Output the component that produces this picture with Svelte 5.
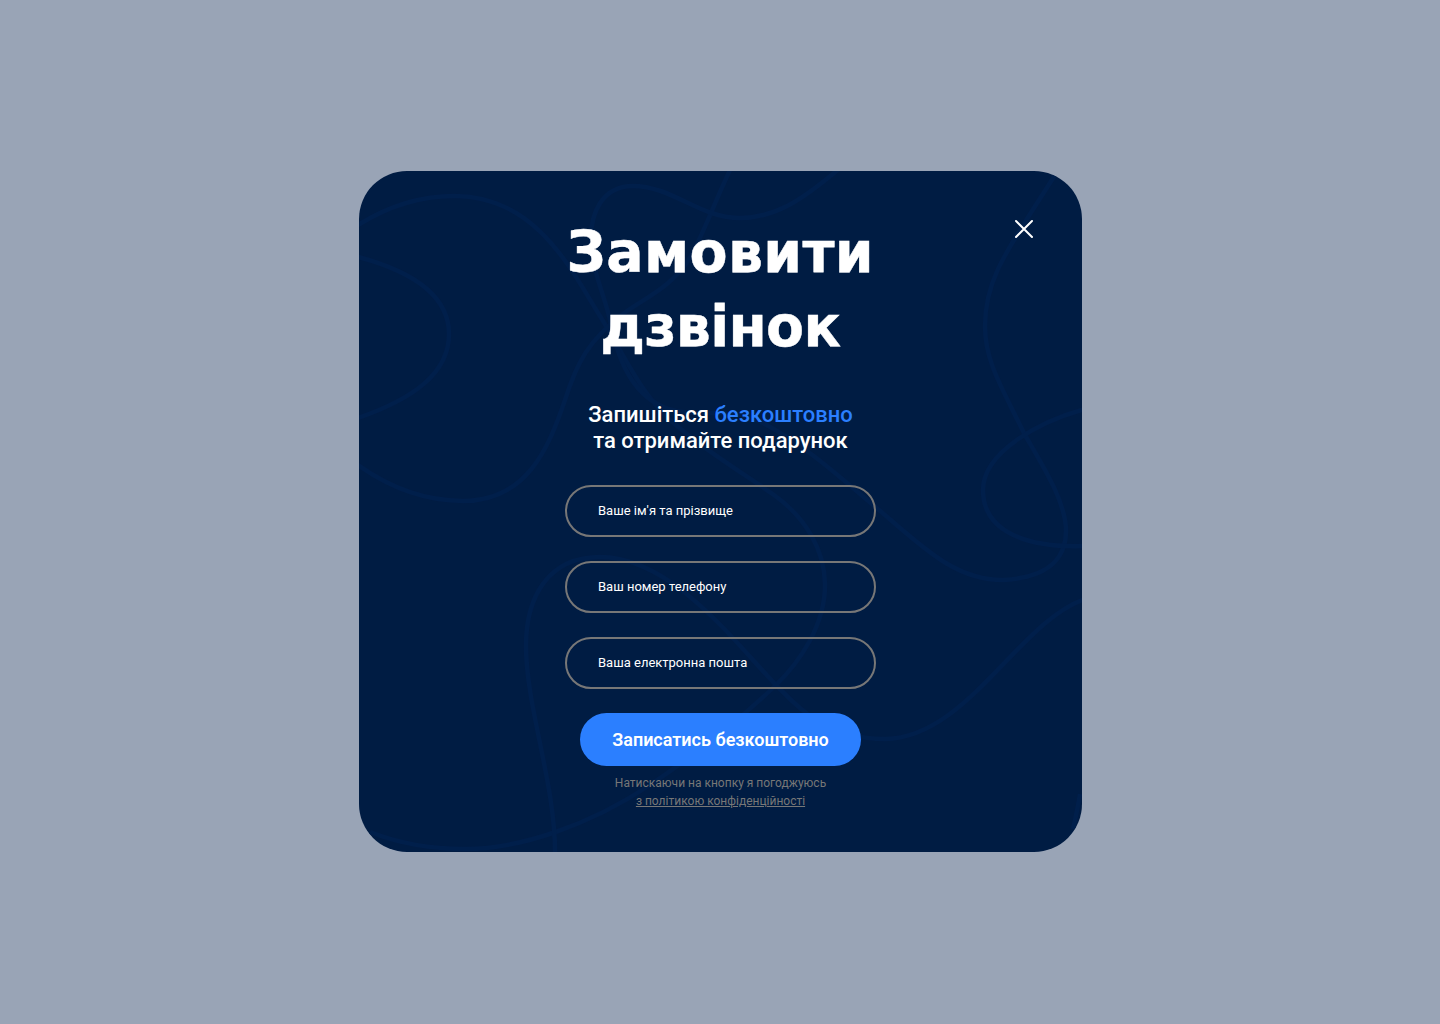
<script>
  const fields = [
    { name: 'name', label: "Ваше ім'я та прізвище" },
    { name: 'phone', label: 'Ваш номер телефону' },
    { name: 'email', label: 'Ваша електронна пошта' },
  ];
</script>

<main class="overlay">
  <section class="card">
    <svg class="waves" viewBox="359 171 723 681" aria-hidden="true">
      <path d="M355 227C392 203 424 196 454 196C536 196 570 268 600 316C626 358 638 389 669 419C704 450 740 471 774 495C805 517 825 550 825 585C825 625 800 662 775 686C735 724 696 754 650 785C590 825 520 849 465 849C430 849 398 843 370 832" />
      <path d="M355 463C392 490 428 501 463 501C526 501 548 450 565 400C577 362 589 340 623 314C644 298 672 288 691 256C705 230 715 201 731 168" />
      <path d="M840 168C800 202 774 218 739 218C700 218 672 186 633 186C602 186 591 213 591 238C591 270 604 292 611 324C621 376 642 399 666 408C699 420 728 404 763 423C808 447 843 480 879 510C922 546 954 580 1003 580C1043 578 1066 562 1066 531C1066 502 1043 466 1025 435C1001 386 985 361 985 326C985 277 1009 248 1055 175" />
      <path d="M1085 409C1040 421 983 452 983 490C983 532 1027 548 1085 546" />
      <path d="M1085 599C1019 621 967 738 885 739C823 739 795 704 775 684C732 639 671 557 600 557C548 557 526 597 526 646C526 707 556 786 555 855" />
      <path d="M355 256C405 269 449 291 449 334C449 373 414 399 355 419" />
      <path d="M1080 794C1078 807 1076 816 1073 829" />
    </svg>

    <button class="close" type="button" aria-label="Закрити">
      <svg viewBox="0 0 20 20"><path d="M2 2L18 18M18 2L2 18" /></svg>
    </button>

    <h1><span class="first">Замовити</span><span class="second">дзвінок</span></h1>
    <p class="lead">Запишіться <b>безкоштовно</b><br />та отримайте подарунок</p>

    <form>
      {#each fields as field}
        <input name={field.name} placeholder={field.label} aria-label={field.label} />
      {/each}
      <button class="submit" type="button">Записатись безкоштовно</button>
    </form>
    <p class="note">Натискаючи на кнопку я погоджуюсь<br /><u>з політикою конфіденційності</u></p>
  </section>
</main>

<style>
  :global(body) {
    margin: 0;
  }
  .overlay {
    box-sizing: border-box;
    min-height: 1024px;
    padding: 171px 0 0 359px;
    background: #99a4b6;
    font-family: Roboto, sans-serif;
    color: #fff;
  }
  .card {
    position: relative;
    box-sizing: border-box;
    width: 723px;
    height: 681px;
    padding-top: 44px;
    border-radius: 48px;
    overflow: hidden;
    background: #001c43;
    display: flex;
    flex-direction: column;
    align-items: center;
  }
  .card > :not(.waves):not(.close) {
    position: relative;
  }
  .waves {
    position: absolute;
    inset: 0;
    width: 723px;
    height: 681px;
    fill: none;
    stroke: #001f4b;
    stroke-width: 4.5;
  }
  .close {
    position: absolute;
    top: 48px;
    right: 48px;
    width: 20px;
    height: 20px;
    padding: 0;
    border: 0;
    background: none;
  }
  .close svg {
    display: block;
    width: 20px;
    height: 20px;
    fill: none;
    stroke: #fff;
    stroke-width: 2;
    stroke-linecap: round;
  }
  h1 {
    margin: 0;
    display: flex;
    flex-direction: column;
    align-items: center;
    font: 700 57px/74px 'DejaVu Sans', sans-serif;
    font-stretch: condensed;
    white-space: nowrap;
    transform: scaleX(1.08);
    -webkit-text-stroke: 0.4px #fff;
  }
  .first {
    letter-spacing: 0.3px;
  }
  .second {
    letter-spacing: -0.6px;
  }
  .lead {
    margin: 39px 0 0;
    font-size: 22px;
    font-weight: 500;
    line-height: 26px;
    text-align: center;
    white-space: nowrap;
  }
  .lead b {
    font-weight: 500;
    color: #2b7fff;
  }
  form {
    margin-top: 31px;
    display: flex;
    flex-direction: column;
    align-items: center;
    gap: 24px;
  }
  input {
    box-sizing: border-box;
    width: 311px;
    height: 52px;
    padding: 0 31px 2px;
    border: 2px solid #777;
    border-radius: 26px;
    background: none;
    font: 400 13px Roboto, sans-serif;
    color: #fff;
  }
  input::placeholder {
    color: #fff;
    opacity: 1;
  }
  .submit {
    width: 281px;
    height: 53px;
    padding: 0;
    border: 0;
    border-radius: 27px;
    background: #2b7fff;
    font: 600 18px Roboto, sans-serif;
    color: #fff;
    white-space: nowrap;
  }
  .note {
    margin: 8px 0 0;
    font-size: 12px;
    line-height: 18px;
    text-align: center;
    color: #777;
  }
</style>
